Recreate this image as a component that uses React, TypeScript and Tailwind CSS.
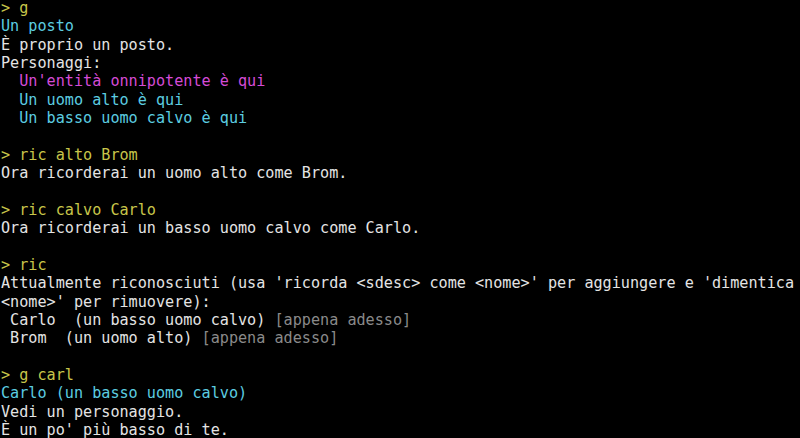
import React from "react";

type Seg = { t: string; c?: string };
type Line = Seg[];

const W = "text-[#e4e4e4]";
const Y = "text-[#c8c64a]";
const C = "text-[#5ccde0]";
const M = "text-[#d54bd6]";
const G = "text-[#8a8a8a]";

const lines: Line[] = [
  [{ t: "> g", c: Y }],
  [{ t: "Un posto", c: C }],
  [{ t: "È proprio un posto." }],
  [{ t: "Personaggi:" }],
  [{ t: "  Un'entità onnipotente è qui", c: M }],
  [{ t: "  Un uomo alto è qui", c: C }],
  [{ t: "  Un basso uomo calvo è qui", c: C }],
  [],
  [{ t: "> ric alto Brom", c: Y }],
  [{ t: "Ora ricorderai un uomo alto come Brom." }],
  [],
  [{ t: "> ric calvo Carlo", c: Y }],
  [{ t: "Ora ricorderai un basso uomo calvo come Carlo." }],
  [],
  [{ t: "> ric", c: Y }],
  [
    {
      t: "Attualmente riconosciuti (usa 'ricorda <sdesc> come <nome>' per aggiungere e 'dimentica",
    },
  ],
  [{ t: "<nome>' per rimuovere):" }],
  [{ t: " Carlo  (un basso uomo calvo) " }, { t: "[appena adesso]", c: G }],
  [{ t: " Brom  (un uomo alto) " }, { t: "[appena adesso]", c: G }],
  [],
  [{ t: "> g carl", c: Y }],
  [{ t: "Carlo (un basso uomo calvo)", c: C }],
  [{ t: "Vedi un personaggio." }],
  [{ t: "È un po' più basso di te." }],
];

export default function App() {
  return (
    <div className="h-[438px] w-[800px] overflow-hidden bg-black">
      <div
        className={`-mt-px pl-px font-['DejaVu_Sans_Mono',monospace] text-[15.15px] leading-[18.35px] ${W}`}
      >
        {lines.map((line, i) => (
          <div key={i} className="h-[18.35px] whitespace-pre">
            {line.map((s, j) => (
              <span key={j} className={s.c ?? ""}>
                {s.t}
              </span>
            ))}
          </div>
        ))}
      </div>
    </div>
  );
}
